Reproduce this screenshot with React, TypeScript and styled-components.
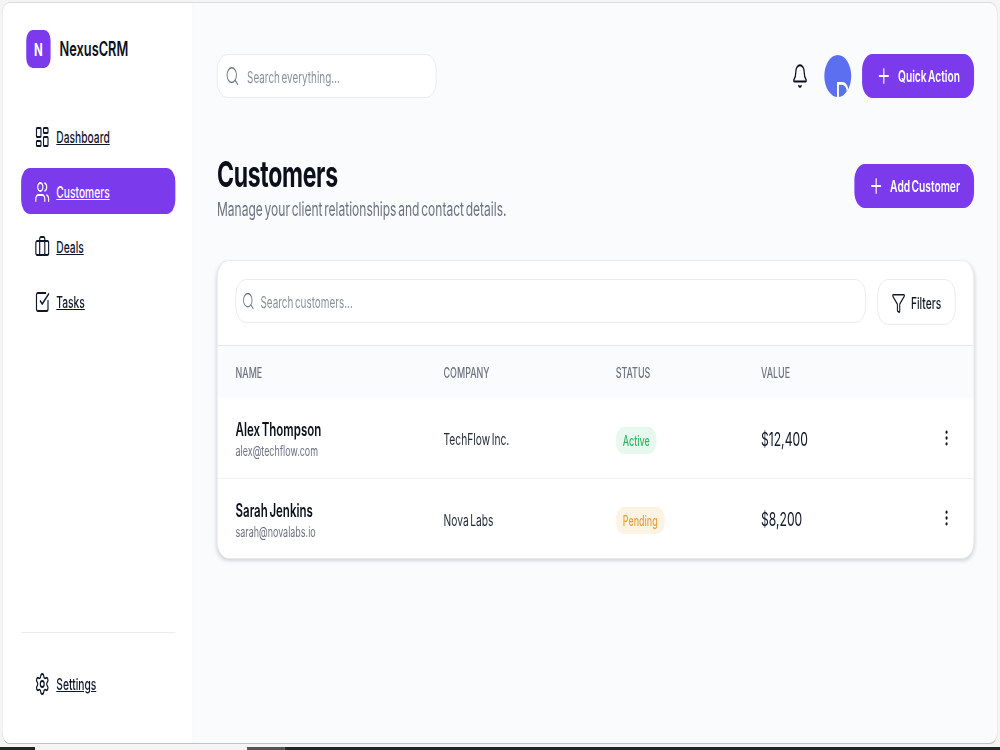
import styled, { createGlobalStyle } from "styled-components";
import {
  Bell,
  Briefcase,
  EllipsisVertical,
  Funnel,
  LayoutDashboard,
  Plus,
  Search,
  Settings,
  SquareCheckBig,
  Users,
} from "lucide-react";

const GlobalStyle = createGlobalStyle`
  html, body {
    margin: 0;
    height: 100%;
    overflow: hidden;
    background: #f5f5f5;
  }
  * { box-sizing: border-box; }
`;

/* the whole capture is squeezed horizontally, so lay out wide and squash */
const Stage = styled.div`
  width: 1563px;
  height: 750px;
  transform: scaleX(0.64);
  transform-origin: left top;
  display: flex;
  flex-direction: column;
  font-family: Inter, "Liberation Sans", sans-serif;
  word-spacing: -2px;
  color: #0f172a;
`;

const Window = styled.div`
  height: 742px;
  margin: 2px 4px 0 3px;
  display: flex;
  border: 1px solid #dcdcdc;
  border-bottom-color: #c2c2c2;
  border-radius: 12px;
  overflow: hidden;
  background: #fafbfd;
`;

const Taskbar = styled.div`
  margin-top: auto;
  height: 3px;
  display: flex;
`;

const TaskbarPiece = styled.div<{ $w?: number; $c: string }>`
  background: ${(p) => p.$c};
  ${(p) => (p.$w ? `width: ${p.$w}px;` : "flex: 1;")}
`;

const Sidebar = styled.aside`
  width: 298px;
  flex-shrink: 0;
  padding: 27px 27px 0 29px;
  display: flex;
  flex-direction: column;
  background: #fff;
  border-right: 1px solid #eef0f4;
`;

const Brand = styled.div`
  display: flex;
  align-items: center;
  gap: 14px;
  padding-left: 8px;
  margin-bottom: 45px;
`;

const LogoBox = styled.div`
  width: 38px;
  height: 38px;
  border-radius: 10px;
  background: #7c3aed;
  color: #fff;
  display: flex;
  align-items: center;
  justify-content: center;
  font-size: 18px;
  font-weight: 700;
`;

const BrandName = styled.span`
  font-size: 20px;
  font-weight: 600;
  color: #0b0f1a;
`;

const Nav = styled.nav`
  display: flex;
  flex-direction: column;
  gap: 9px;
`;

const NavItem = styled.a<{ $active?: boolean }>`
  height: 46px;
  padding: 1px 0 0 21px;
  display: flex;
  align-items: center;
  gap: 10px;
  border-radius: 14px;
  font-size: 16px;
  font-weight: 500;
  text-decoration: underline;
  color: ${(p) => (p.$active ? "#fff" : "#0f172a")};
  background: ${(p) => (p.$active ? "#7c3aed" : "transparent")};
`;

const SidebarFoot = styled.div`
  margin-top: auto;
  border-top: 1px solid #e9ebef;
  padding-top: 27px;
  height: 111px;
`;

const Main = styled.main`
  flex: 1;
  padding: 51px 36px 0 37px;
`;

const TopBar = styled.div`
  display: flex;
  align-items: center;
  height: 44px;
`;

const SearchBox = styled.label<{ $wide?: boolean }>`
  display: flex;
  align-items: center;
  height: 44px;
  gap: ${(p) => (p.$wide ? "9px" : "12px")};
  padding: 0 16px 0 ${(p) => (p.$wide ? "9px" : "12px")};
  background: #fff;
  border: 1px solid #e5e7eb;
  border-radius: 16px;
  color: #6b7280;
  ${(p) => (p.$wide ? "flex: 1;" : "width: 343px;")}
`;

const SearchInput = styled.input`
  flex: 1;
  min-width: 0;
  border: none;
  outline: none;
  background: transparent;
  padding: 2px 0 0;
  font: 400 15.5px Inter, "Liberation Sans", sans-serif;
  word-spacing: -2px;
  &::placeholder { color: #8a909b; }
`;

const TopActions = styled.div`
  margin-left: auto;
  display: flex;
  align-items: center;
`;

const BellButton = styled.div`
  display: flex;
  color: #0b0f1a;
  margin-right: 25px;
`;

const Avatar = styled.div`
  width: 42px;
  height: 42px;
  margin-right: 17px;
  border-radius: 50%;
  overflow: hidden;
  background: #5b6ff0;
  color: #fff;
  font-size: 32px;
  line-height: 38px;
  padding: 21px 0 0 17px;
`;

const PrimaryButton = styled.button`
  height: 44px;
  padding: 0 22px;
  display: flex;
  align-items: center;
  gap: 10px;
  border: none;
  border-radius: 16px;
  background: #7c3aed;
  color: #fff;
  font: 600 16px Inter, "Liberation Sans", sans-serif;
  word-spacing: -2px;
`;

const PageHeader = styled.div`
  margin-top: 54px;
  display: flex;
  align-items: flex-start;
  justify-content: space-between;
`;

const Title = styled.h1`
  margin: 0;
  font-size: 36px;
  line-height: 44px;
  font-weight: 700;
  letter-spacing: -0.5px;
  color: #0b0f1a;
`;

const Subtitle = styled.p`
  margin: 2px 0 0;
  font-size: 18.8px;
  line-height: 24px;
  word-spacing: -2.5px;
  color: #6b7280;
`;

const HeaderAction = styled.div`
  margin-top: 12px;
`;

const Card = styled.section`
  margin-top: 38px;
  background: #fff;
  border: 1px solid #e5e7eb;
  border-radius: 18px;
  overflow: hidden;
  box-shadow: 0 2px 5px rgba(15, 23, 42, 0.16);
`;

const Toolbar = styled.div`
  height: 85px;
  padding: 18px 28px 0 28px;
  display: flex;
  align-items: flex-start;
  gap: 18px;
  border-bottom: 1px solid #e5e7eb;
`;

const FilterButton = styled.button`
  height: 46px;
  width: 122px;
  padding: 2px 0 0;
  display: flex;
  align-items: center;
  justify-content: center;
  gap: 8px;
  background: #fff;
  border: 1px solid #e5e7eb;
  border-radius: 16px;
  color: #111827;
  font: 500 16px Inter, "Liberation Sans", sans-serif;
`;

const Grid = styled.div<{ $head?: boolean }>`
  display: grid;
  grid-template-columns: 325px 269px 227px 1fr 24px;
  align-items: center;
  padding: ${(p) => (p.$head ? "0 28px" : "2px 28px 0")};
  height: ${(p) => (p.$head ? "52px" : "80px")};
  background: ${(p) => (p.$head ? "#fafbfc" : "#fff")};
`;

const Rows = styled.div`
  & > * + * { border-top: 1px solid #f0f1f4; }
`;

const HeadCell = styled.span`
  font-size: 14px;
  font-weight: 500;
  text-transform: uppercase;
  color: #6b7280;
`;

const Name = styled.div`
  font-size: 18px;
  font-weight: 600;
  line-height: 24px;
  color: #0b0f1a;
`;

const Email = styled.div`
  font-size: 14px;
  line-height: 18px;
  color: #6b7280;
`;

const Company = styled.span`
  font-size: 16px;
  color: #1f2937;
`;

const Badge = styled.span<{ $tone: "green" | "amber" }>`
  justify-self: start;
  margin-top: 2px;
  padding: 0 11px;
  height: 27px;
  line-height: 27px;
  border-radius: 13px;
  font-size: 14px;
  font-weight: 500;
  background: ${(p) => (p.$tone === "green" ? "#e7f8ee" : "#fdf3e2")};
  color: ${(p) => (p.$tone === "green" ? "#35b36b" : "#e8a23a")};
`;

const Money = styled.span`
  font-size: 19px;
  font-weight: 400;
  color: #0f172a;
`;

const RowMenu = styled.div`
  display: flex;
  margin-top: -3px;
  color: #0b0f1a;
`;

const navItems = [
  { label: "Dashboard", icon: LayoutDashboard },
  { label: "Customers", icon: Users, active: true },
  { label: "Deals", icon: Briefcase },
  { label: "Tasks", icon: SquareCheckBig },
];

const customers = [
  { name: "Alex Thompson", email: "alex@techflow.com", company: "TechFlow Inc.", status: "Active", tone: "green" as const, value: "$12,400" },
  { name: "Sarah Jenkins", email: "sarah@novalabs.io", company: "Nova Labs", status: "Pending", tone: "amber" as const, value: "$8,200" },
];

export default function App() {
  return (
    <>
      <GlobalStyle />
      <Stage>
        <Window>
          <Sidebar>
            <Brand>
              <LogoBox>N</LogoBox>
              <BrandName>NexusCRM</BrandName>
            </Brand>
            <Nav>
              {navItems.map((item) => (
                <NavItem key={item.label} href="#" $active={item.active}>
                  <item.icon size={24} strokeWidth={1.8} />
                  {item.label}
                </NavItem>
              ))}
            </Nav>
            <SidebarFoot>
              <NavItem href="#">
                <Settings size={24} strokeWidth={1.8} />
                Settings
              </NavItem>
            </SidebarFoot>
          </Sidebar>
          <Main>
            <TopBar>
              <SearchBox>
                <Search size={22} strokeWidth={1.6} />
                <SearchInput placeholder="Search everything..." />
              </SearchBox>
              <TopActions>
                <BellButton>
                  <Bell size={26} strokeWidth={1.8} />
                </BellButton>
                <Avatar>D</Avatar>
                <PrimaryButton>
                  <Plus size={24} strokeWidth={1.8} />
                  Quick Action
                </PrimaryButton>
              </TopActions>
            </TopBar>
            <PageHeader>
              <div>
                <Title>Customers</Title>
                <Subtitle>Manage your client relationships and contact details.</Subtitle>
              </div>
              <HeaderAction>
                <PrimaryButton>
                  <Plus size={24} strokeWidth={1.8} />
                  Add Customer
                </PrimaryButton>
              </HeaderAction>
            </PageHeader>
            <Card>
              <Toolbar>
                <SearchBox $wide>
                  <Search size={20} strokeWidth={1.6} />
                  <SearchInput placeholder="Search customers..." />
                </SearchBox>
                <FilterButton>
                  <Funnel size={22} strokeWidth={1.8} />
                  Filters
                </FilterButton>
              </Toolbar>
              <Grid $head>
                <HeadCell>Name</HeadCell>
                <HeadCell>Company</HeadCell>
                <HeadCell>Status</HeadCell>
                <HeadCell>Value</HeadCell>
                <span />
              </Grid>
              <Rows>
                {customers.map((c) => (
                  <Grid key={c.email}>
                    <div>
                      <Name>{c.name}</Name>
                      <Email>{c.email}</Email>
                    </div>
                    <Company>{c.company}</Company>
                    <Badge $tone={c.tone}>{c.status}</Badge>
                    <Money>{c.value}</Money>
                    <RowMenu>
                      <EllipsisVertical size={20} strokeWidth={2} />
                    </RowMenu>
                  </Grid>
                ))}
              </Rows>
            </Card>
          </Main>
        </Window>
        <Taskbar>
          <TaskbarPiece $w={55} $c="#1f2624" />
          <TaskbarPiece $w={331} $c="#f4f4f4" />
          <TaskbarPiece $w={59} $c="#555" />
          <TaskbarPiece $c="#1f2a2a" />
        </Taskbar>
      </Stage>
    </>
  );
}
